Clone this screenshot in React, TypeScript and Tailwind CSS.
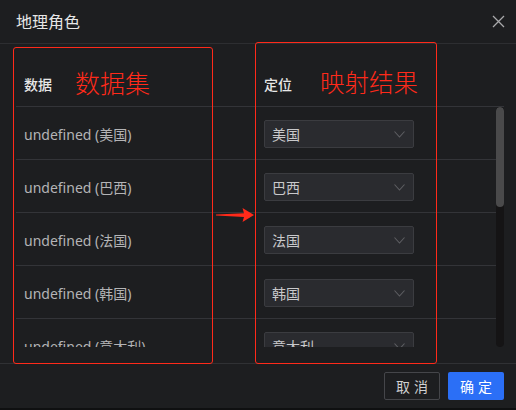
import React from "react";

const rows = ["美国", "巴西", "法国", "韩国", "意大利", "德国"];

function Chevron() {
  return (
    <svg width="11" height="7" viewBox="0 0 11 7" fill="none">
      <path d="M0.5 0.5 L5.5 6 L10.5 0.5" stroke="#5d5e62" strokeWidth="1.1" />
    </svg>
  );
}

export default function App() {
  return (
    <div
      className="relative w-[516px] h-[410px] bg-[#1d1e20] overflow-hidden flex flex-col"
      style={{ fontFamily: '"Noto Sans", "Noto Sans CJK SC", sans-serif' }}
    >
      {/* header */}
      <div className="h-[44px] shrink-0 flex items-center justify-between pl-4 pr-[11px] border-b border-[#2d2e31]">
        <span className="text-[16px] text-[#e6e6e6] leading-none">地理角色</span>
        <svg width="13" height="13" viewBox="0 0 13 13">
          <path d="M1 1 L12 12 M12 1 L1 12" stroke="#a9a9ab" strokeWidth="1.3" />
        </svg>
      </div>

      {/* body */}
      <div className="h-[319px] shrink-0 pt-[18px] pl-4 pr-3 pb-4 flex flex-col">
        <div className="flex h-[45px] shrink-0 border-b border-[#333438] items-center">
          <div className="w-[240px] pl-2 text-[14px] font-medium text-[#e8e8e8]">数据</div>
          <div className="w-[240px] pl-2 text-[14px] font-medium text-[#e8e8e8]">定位</div>
        </div>
        <div className="flex h-[240px]">
          <div className="w-[480px] overflow-hidden">
            {rows.map((r) => (
              <div key={r} className="flex h-[53px] border-b border-[#333438] items-center pt-[2px]">
                <div className="w-[240px] pl-2 text-[14px] text-[#b4b4b6]">undefined ({r})</div>
                <div className="w-[240px] pl-2">
                  <div className="w-[150px] h-[28px] rounded-[2px] bg-[#2a2b2f] border border-[#3b3c40] flex items-center justify-between pl-[7px] pr-[8px]">
                    <span className="text-[14px] text-[#c9c9cb]">{r}</span>
                    <Chevron />
                  </div>
                </div>
              </div>
            ))}
          </div>
          <div className="w-2 h-[240px] rounded-full bg-[#151415] overflow-hidden">
            <div className="w-2 h-[100px] rounded-full bg-[#4a4a4b]" />
          </div>
        </div>
      </div>

      {/* footer */}
      <div className="h-[45px] shrink-0 border-t border-[#303134] flex items-center justify-end gap-2 pr-3">
        <button className="w-[56px] h-[28px] rounded-[2px] border border-[#45464a] text-[14px] text-[#d0d0d0] tracking-[4px] pl-[4px]">
          取消
        </button>
        <button className="w-[56px] h-[28px] rounded-[2px] bg-[#2b6ff6] text-[14px] text-white tracking-[4px] pl-[4px]">
          确定
        </button>
      </div>
      <div className="h-[2px] bg-[#0f1011]" />

      {/* annotations */}
      <div className="absolute left-[13px] top-[47px] w-[200px] h-[317px] border border-[#ff2a1a] rounded-[3px] pointer-events-none" />
      <div className="absolute left-[255px] top-[42px] w-[182px] h-[322px] border border-[#ff2a1a] rounded-[3px] pointer-events-none" />
      <div className="absolute left-[75px] top-[67px] text-[25px] leading-[32px] font-light text-[#ff2a1a]">数据集</div>
      <div className="absolute left-[320px] top-[67px] text-[24.5px] leading-[32px] font-light text-[#ff2a1a]">映射结果</div>
      <svg className="absolute left-[215px] top-[207px]" width="40" height="16" viewBox="0 0 40 16">
        <path d="M1 7.6 L29 6.3 L27.5 1 L39 8 L27.5 15 L29 9.9 L1 8.6 Z" fill="#ff2a1a" />
      </svg>
    </div>
  );
}
